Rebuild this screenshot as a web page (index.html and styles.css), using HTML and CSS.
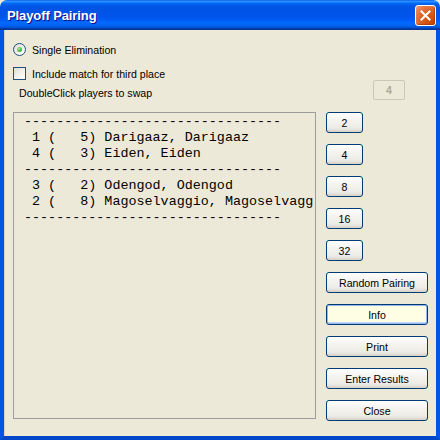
FILE: index.html
```html
<!DOCTYPE html>
<html lang="en">
<head>
    <meta charset="UTF-8">
    <meta name="viewport" content="width=device-width, initial-scale=1.0">
    <title>Playoff Pairing</title>
    <link rel="stylesheet" href="styles.css">
</head>
<body>
    <div class="window">
        <div class="titlebar">
            <span class="title">Playoff Pairing</span>
            <button class="close_btn" aria-label="Close">
                <svg width="13" height="13" viewBox="0 0 13 13">
                    <path d="M2.5 2.5 L10.5 10.5 M10.5 2.5 L2.5 10.5" stroke="#fff" stroke-width="2" stroke-linecap="square"/>
                </svg>
            </button>
        </div>
        <div class="content">
            <label class="option">
                <input type="radio" name="mode" checked>
                <span>Single Elimination</span>
            </label>
            <label class="option option_check">
                <input type="checkbox" name="third">
                <span>Include match for third place</span>
            </label>
            <div class="hint_row">
                <span class="hint">DoubleClick players to swap</span>
                <div class="count">4</div>
            </div>
            <div class="main">
                <div class="pairings">--------------------------------
 1 (   5) Darigaaz, Darigaaz
 4 (   3) Eiden, Eiden
--------------------------------
 3 (   2) Odengod, Odengod
 2 (   8) Magoselvaggio, Magoselvagg
--------------------------------</div>
                <div class="buttons">
                    <button class="btn btn_small">2</button>
                    <button class="btn btn_small">4</button>
                    <button class="btn btn_small">8</button>
                    <button class="btn btn_small">16</button>
                    <button class="btn btn_small">32</button>
                    <button class="btn">Random Pairing</button>
                    <button class="btn btn_default">Info</button>
                    <button class="btn">Print</button>
                    <button class="btn">Enter Results</button>
                    <button class="btn">Close</button>
                </div>
            </div>
        </div>
    </div>
</body>
</html>
```

FILE: styles.css
```css
body {
    margin: 0;
    background-color: #ece9d8;
    font-family: "Liberation Sans", Arial, sans-serif;
    font-size: 10.6px;
}

.window {
    width: 440px;
    height: 440px;
    display: flex;
    flex-direction: column;
    box-sizing: border-box;
}

.titlebar {
    height: 30px;
    flex: none;
    display: flex;
    align-items: center;
    justify-content: space-between;
    padding: 0 4px 0 7px;
    border-radius: 7px 7px 0 0;
    background: linear-gradient(to bottom, #0058ee 0%, #3593ff 4%, #288eff 6%, #127dff 8%, #036ffc 10%, #0262ee 14%, #0057e5 20%, #0054e3 24%, #0055eb 56%, #005bf5 66%, #026afe 76%, #0062ef 86%, #0052d6 92%, #0040ab 94%, #003092 100%);
}

.title {
    color: #fff;
    font-weight: bold;
    font-size: 13px;
    letter-spacing: -0.1px;
    text-shadow: 1px 1px #0f1089;
    margin-top: 1px;
}

.close_btn {
    width: 21px;
    height: 21px;
    padding: 0;
    margin-top: 1px;
    display: flex;
    align-items: center;
    justify-content: center;
    border: 1px solid #fff;
    border-radius: 3px;
    background: radial-gradient(circle at 85% 85%, #cc4600 0%, #dc6527 55%, #e97f4e 80%, #f0a07b 100%);
    box-shadow: inset -1px -1px 1px rgba(120, 30, 0, 0.4);
}

.content {
    flex: 1;
    display: flex;
    flex-direction: column;
    padding: 13px 8px 0 9px;
    border-left: 4px solid #0055e5;
    border-right: 4px solid #0055e5;
    border-bottom: 4px solid #0046c8;
    box-shadow: inset 1px 0 #d8d2bd;
}

.option {
    display: flex;
    align-items: center;
    height: 13px;
    gap: 6px;
}

.option_check {
    margin-top: 11px;
}

.option input {
    appearance: none;
    margin: 0;
    width: 13px;
    height: 13px;
    box-sizing: border-box;
    border: 1px solid #1c5180;
    background: linear-gradient(135deg, #dcdbd4 0%, #f4f3ee 60%, #fff 100%);
}

.option input[type="radio"] {
    border-radius: 50%;
    display: flex;
    align-items: center;
    justify-content: center;
}

.option input[type="radio"]:checked::after {
    content: "";
    width: 5px;
    height: 5px;
    border-radius: 50%;
    background: radial-gradient(circle at 35% 35%, #a8e8a4 0%, #4ec24a 50%, #1a9c17 100%);
}

.hint_row {
    display: flex;
    align-items: flex-end;
    justify-content: space-between;
    height: 20px;
    padding-left: 6px;
    padding-right: 23px;
}

.hint {
    line-height: 14px;
}

.count {
    width: 32px;
    height: 20px;
    box-sizing: border-box;
    border: 1px solid #c9c7ba;
    border-radius: 2px;
    color: #aca899;
    font-weight: bold;
    display: flex;
    align-items: center;
    justify-content: center;
}

.main {
    display: flex;
    gap: 10px;
    margin-top: 12px;
}

.pairings {
    width: 304px;
    height: 307px;
    box-sizing: border-box;
    border: 1px solid #9d9d9d;
    padding: 1px 0 0 10px;
    font-family: "Liberation Mono", "Courier New", monospace;
    font-size: 13.4px;
    line-height: 16px;
    white-space: pre;
    overflow: hidden;
    color: #000;
}

.buttons {
    display: flex;
    flex-direction: column;
    align-items: flex-start;
    gap: 11px;
}

.btn {
    width: 102px;
    height: 21px;
    padding: 0;
    font-family: "Liberation Sans", Arial, sans-serif;
    font-size: 10.6px;
    color: #000;
    border: 1px solid #003c74;
    border-radius: 3px;
    background: linear-gradient(to bottom, #fff 0%, #f4f3ee 40%, #ecebe6 80%, #d6d0c5 100%);
}

.btn_small {
    width: 37px;
}

.btn_default {
    background: #fefee4;
    box-shadow: inset 0 0 0 1px #97b8ec, inset 0 -1px 0 1px #c3d5fd;
}
```
